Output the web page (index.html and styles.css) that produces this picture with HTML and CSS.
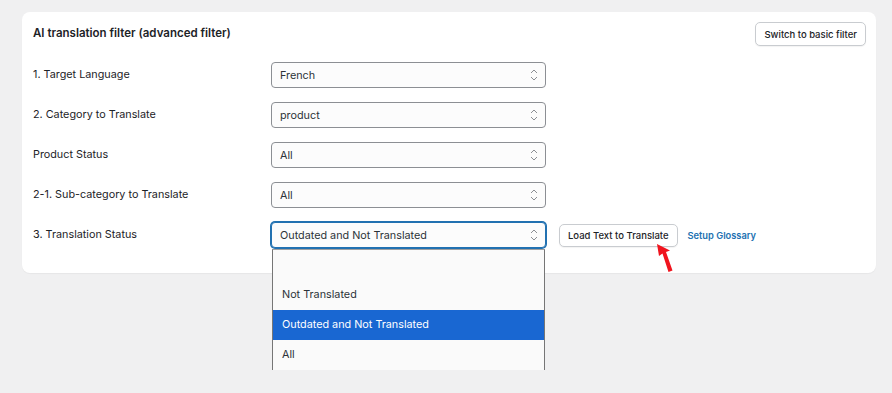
FILE: index.html
```html
<!DOCTYPE html>
<html>
<head>
<meta charset="utf-8">
<link rel="stylesheet" href="styles.css">
</head>
<body>
<div class="page">
  <div class="card">
    <div class="card-head">
      <h2 class="title">AI translation filter (advanced filter)</h2>
      <button class="btn">Switch to basic filter</button>
    </div>
    <div class="rows">
      <div class="row">
        <span class="label">1. Target Language</span>
        <div class="select"><span>French</span><svg class="chev" width="8" height="14" viewBox="0 0 8 14"><path d="M1 5 L4 2 L7 5 M1 9 L4 12 L7 9" fill="none" stroke="#8c8f94" stroke-width="1"/></svg></div>
      </div>
      <div class="row">
        <span class="label">2. Category to Translate</span>
        <div class="select"><span>product</span><svg class="chev" width="8" height="14" viewBox="0 0 8 14"><path d="M1 5 L4 2 L7 5 M1 9 L4 12 L7 9" fill="none" stroke="#8c8f94" stroke-width="1"/></svg></div>
      </div>
      <div class="row">
        <span class="label">Product Status</span>
        <div class="select"><span>All</span><svg class="chev" width="8" height="14" viewBox="0 0 8 14"><path d="M1 5 L4 2 L7 5 M1 9 L4 12 L7 9" fill="none" stroke="#8c8f94" stroke-width="1"/></svg></div>
      </div>
      <div class="row">
        <span class="label">2-1. Sub-category to Translate</span>
        <div class="select"><span>All</span><svg class="chev" width="8" height="14" viewBox="0 0 8 14"><path d="M1 5 L4 2 L7 5 M1 9 L4 12 L7 9" fill="none" stroke="#8c8f94" stroke-width="1"/></svg></div>
      </div>
      <div class="row">
        <span class="label">3. Translation Status</span>
        <div class="select-wrap">
          <div class="select focused"><span>Outdated and Not Translated</span><svg class="chev" width="8" height="14" viewBox="0 0 8 14"><path d="M1 5 L4 2 L7 5 M1 9 L4 12 L7 9" fill="none" stroke="#8c8f94" stroke-width="1"/></svg></div>
          <ul class="dropdown">
            <li class="opt"></li>
            <li class="opt">Not Translated</li>
            <li class="opt selected">Outdated and Not Translated</li>
            <li class="opt">All</li>
          </ul>
        </div>
        <div class="actions">
          <div class="load-wrap">
            <button class="btn">Load Text to Translate</button>
            <svg class="arrow" width="24" height="34" viewBox="0 0 24 34">
              <path d="M2 2 L4 14 L7.5 11.5 L13.5 30 L17.5 28.5 L11 10 L15 8.5 Z" fill="#f0141e"/>
            </svg>
          </div>
          <a class="link" href="#">Setup Glossary</a>
        </div>
      </div>
    </div>
  </div>
</div>
</body>
</html>
```

FILE: styles.css
```css
* { box-sizing: border-box; }
html, body { margin: 0; padding: 0; }
body {
  background: #f0f0f1;
  font-family: Inter, "Noto Sans", sans-serif;
  color: #1d2327;
  width: 892px;
  height: 393px;
  overflow: hidden;
}
.page {
  padding: 12px 16px 0 22px;
}
.card {
  background: #fff;
  border-radius: 8px;
  padding: 10px 10px 25px 11px;
  box-shadow: 0 1px 1px rgba(0,0,0,0.04);
}
.card-head {
  display: flex;
  justify-content: space-between;
  align-items: center;
}
.title {
  margin: 0;
  font-size: 11.5px;
  font-weight: 600;
  color: #1d2327;
  position: relative;
  top: -1px;
}
.btn {
  font-family: Inter, "Noto Sans", sans-serif;
  font-size: 9.5px;
  font-weight: 500;
  color: #1d2327;
  background: #fff;
  border: 1px solid #c9ccd0;
  border-radius: 5px;
  height: 24px;
  padding: 0 8px;
  cursor: pointer;
  box-shadow: 0 1px 1px rgba(0,0,0,0.05);
}
.rows {
  margin-top: 16px;
  display: flex;
  flex-direction: column;
  gap: 14px;
}
.row {
  display: flex;
  align-items: center;
  height: 26px;
}
.label {
  width: 238px;
  font-size: 10.8px;
  color: #1d2327;
  position: relative;
  top: -1px;
}
.select-wrap {
  position: relative;
  width: 275px;
}
.select {
  width: 275px;
  height: 26px;
  border: 1px solid #8c8f94;
  border-radius: 4px;
  background: #fcfcfc;
  display: flex;
  align-items: center;
  justify-content: space-between;
  padding: 0 7px 0 8px;
  font-size: 10.8px;
  color: #2c3338;
}
.select.focused {
  border-color: #2271b1;
  box-shadow: 0 0 0 1px #2271b1;
}
.chev { display: block; }
.dropdown {
  position: absolute;
  left: 1px;
  top: 27px;
  width: 273px;
  margin: 0;
  padding: 0;
  list-style: none;
  background: #fafafa;
  border: 1px solid #767676;
  border-top-color: #a0a0a0;
  border-bottom: none;
  z-index: 5;
}
.opt {
  height: 30px;
  line-height: 30px;
  padding-left: 9px;
  font-size: 10.8px;
  color: #2c3338;
}
.opt.selected {
  background: #1967d2;
  color: #fff;
}
.actions {
  display: flex;
  align-items: center;
  margin-left: 13px;
  gap: 10px;
}
.actions .btn {
  height: 23px;
  padding: 0 8px;
}
.load-wrap {
  position: relative;
}
.arrow {
  position: absolute;
  left: 96px;
  top: 19px;
}
.link {
  font-size: 9.3px;
  font-weight: 600;
  color: #2271b1;
  text-decoration: none;
}
```
